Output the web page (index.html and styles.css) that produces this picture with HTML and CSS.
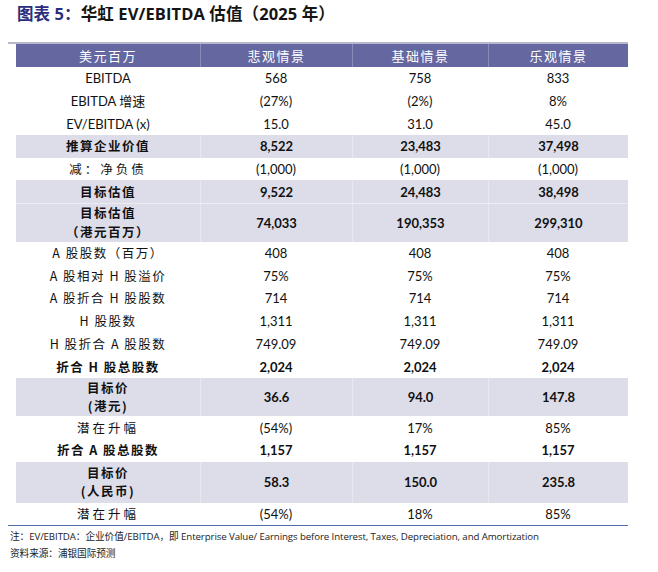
FILE: index.html
```html
<!DOCTYPE html>
<html lang="zh">
<head>
<meta charset="utf-8">
<link rel="stylesheet" href="styles.css">
</head>
<body>
<div class="page">
  <h1 class="title"><span class="fig">图表 5：</span>华虹 EV/EBITDA 估值（2025 年）</h1>
  <div class="table">
    <div class="row head">
      <div class="cell">美元百万</div><div class="cell">悲观情景</div><div class="cell">基础情景</div><div class="cell">乐观情景</div>
    </div>
    <div class="row"><div class="cell"><span>EBITDA</span></div><div class="cell">568</div><div class="cell">758</div><div class="cell">833</div></div>
    <div class="row"><div class="cell"><span>EBITDA <span class="cjk">增速</span></span></div><div class="cell">(27%)</div><div class="cell">(2%)</div><div class="cell">8%</div></div>
    <div class="row"><div class="cell"><span>EV/EBITDA (x)</span></div><div class="cell">15.0</div><div class="cell">31.0</div><div class="cell">45.0</div></div>
    <div class="row shade bold"><div class="cell cjk sp"><span>推算企业价值</span></div><div class="cell">8,522</div><div class="cell">23,483</div><div class="cell">37,498</div></div>
    <div class="row"><div class="cell cjk wide"><span>减：净负债</span></div><div class="cell">(1,000)</div><div class="cell">(1,000)</div><div class="cell">(1,000)</div></div>
    <div class="row shade bold"><div class="cell cjk sp"><span>目标估值</span></div><div class="cell">9,522</div><div class="cell">24,483</div><div class="cell">38,498</div></div>
    <div class="row shade bold tall split"><div class="cell cjk sp"><span>目标估值<br>（港元百万）</span></div><div class="cell">74,033</div><div class="cell">190,353</div><div class="cell">299,310</div></div>
    <div class="row"><div class="cell cjk sp"><span>A 股股数（百万）</span></div><div class="cell">408</div><div class="cell">408</div><div class="cell">408</div></div>
    <div class="row"><div class="cell cjk sp"><span>A 股相对 H 股溢价</span></div><div class="cell">75%</div><div class="cell">75%</div><div class="cell">75%</div></div>
    <div class="row"><div class="cell cjk sp"><span>A 股折合 H 股股数</span></div><div class="cell">714</div><div class="cell">714</div><div class="cell">714</div></div>
    <div class="row"><div class="cell cjk sp"><span>H 股股数</span></div><div class="cell">1,311</div><div class="cell">1,311</div><div class="cell">1,311</div></div>
    <div class="row"><div class="cell cjk sp"><span>H 股折合 A 股股数</span></div><div class="cell">749.09</div><div class="cell">749.09</div><div class="cell">749.09</div></div>
    <div class="row bold"><div class="cell cjk sp"><span>折合 H 股总股数</span></div><div class="cell">2,024</div><div class="cell">2,024</div><div class="cell">2,024</div></div>
    <div class="row shade bold tall"><div class="cell cjk sp"><span>目标价<br>(港元)</span></div><div class="cell">36.6</div><div class="cell">94.0</div><div class="cell">147.8</div></div>
    <div class="row"><div class="cell cjk wide"><span>潜在升幅</span></div><div class="cell">(54%)</div><div class="cell">17%</div><div class="cell">85%</div></div>
    <div class="row bold"><div class="cell cjk sp"><span>折合 A 股总股数</span></div><div class="cell">1,157</div><div class="cell">1,157</div><div class="cell">1,157</div></div>
    <div class="row shade bold tall2"><div class="cell cjk sp"><span>目标价<br>(人民币)</span></div><div class="cell">58.3</div><div class="cell">150.0</div><div class="cell">235.8</div></div>
    <div class="row last"><div class="cell cjk wide"><span>潜在升幅</span></div><div class="cell">(54%)</div><div class="cell">18%</div><div class="cell">85%</div></div>
  </div>
  <p class="note">注：EV/EBITDA：企业价值/EBITDA，即 Enterprise Value/ Earnings before Interest, Taxes, Depreciation, and Amortization</p>
  <p class="note">资料来源：浦银国际预测</p>
</div>
</body>
</html>
```
FILE: styles.css
```css
* { box-sizing: border-box; }
html, body { margin: 0; padding: 0; background: #ffffff; }
body {
  font-family: Lato, "Open Sans", "Noto Sans CJK SC", sans-serif;
  color: #111111;
}
.page { width: 658px; height: 572px; padding-top: 4px; }
.title {
  margin: 0 0 0 17px;
  font-family: "Open Sans", "Noto Sans CJK SC", sans-serif;
  font-size: 16.5px;
  line-height: 20px;
  font-weight: 700;
  color: #151515;
  letter-spacing: 0.1px;
}
.title .fig { color: #2a2d7c; }
.table {
  margin: 18px 0 0 8px;
  width: 620px;
  border-top: 2px solid #b8b8cc;
  border-bottom: 1.5px solid #4d6eaa;
  padding-left: 8px;
  padding-bottom: 0;
}
.row {
  display: grid;
  grid-template-columns: 184px 152px 136px 140px;
  height: 22.7px;
  font-size: 13px;
}
.row .cell {
  display: flex;
  align-items: center;
  justify-content: center;
  text-align: center;
  line-height: 18px;
  white-space: nowrap;
}
.head {
  height: 23px;
  background: #6567a1;
  color: #ffffff;
}
.head .cell {
  font-family: "Noto Sans CJK SC", sans-serif;
  font-weight: 400;
  letter-spacing: 1.5px;
  font-size: 13px;
}
.head .cell + .cell { border-left: 1px solid #8a8cba; }
.shade { background: #dddde9; }
.shade .cell + .cell { border-left: 1px solid #e8e8f1; }
.bold { font-weight: 700; }
.cjk { font-family: "Noto Sans CJK SC", sans-serif; }
.cell.cjk { font-size: 12.5px; }
.sp { letter-spacing: 1.5px; }
.wide { letter-spacing: 3px; }
.bold .cell.cjk { font-weight: 700; }
.row:not(.bold) .cell.cjk { font-weight: 400; }
.tall { height: 38.6px; }
.tall2 { height: 41px; }
.tall .cell.cjk, .tall2 .cell.cjk { line-height: 18.5px; }
.split { border-top: 1px solid #ececf3; }
.last { height: 22px; }
.note {
  margin: 5px 0 0 10px;
  font-family: "Open Sans", "Noto Sans CJK SC", sans-serif;
  font-size: 9.7px;
  line-height: 12px;
  color: #222222;
  letter-spacing: -0.1px;
}
.note + .note { margin-top: 5px; }
```
